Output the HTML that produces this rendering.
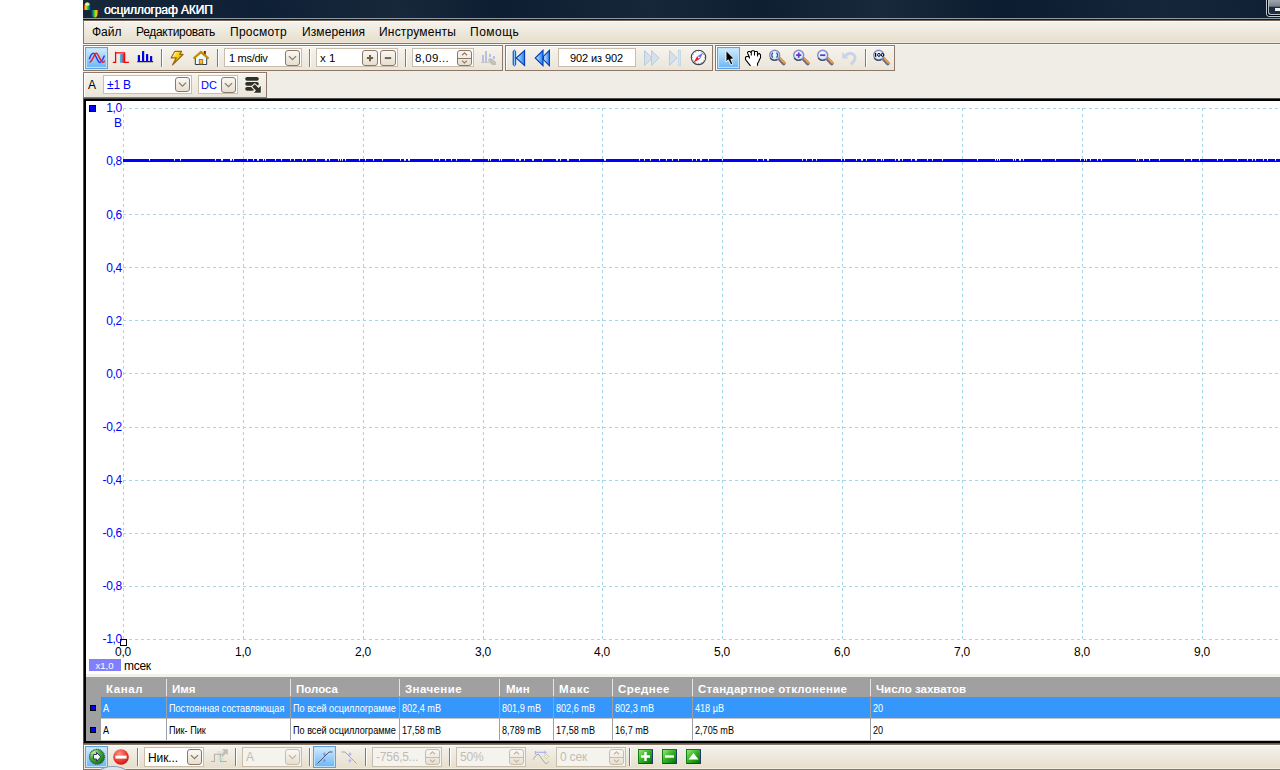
<!DOCTYPE html><html><head><meta charset="utf-8"><style>
*{margin:0;padding:0;box-sizing:border-box}
html,body{width:1280px;height:770px;overflow:hidden;background:#fff;font-family:"Liberation Sans",sans-serif}
.ab{position:absolute}
.t{position:absolute;white-space:pre;line-height:1}
.box{position:absolute;border:1px solid #8b7868;background:linear-gradient(#f6f4ee,#ebe5d8);box-shadow:inset 1px 1px 0 #fff}
.sep{position:absolute;width:2px;height:18px;border-left:1px solid #8b7868;border-right:1px solid #fff}
.cb{position:absolute;border:1px solid #c9bdab;background:#fff}
.dd{position:absolute;width:15px;height:16px;border:1px solid #8b7868;border-radius:3px;background:linear-gradient(#faf8f3,#e6dfcf)}
.sel{position:absolute;width:23px;height:22px;border:1px solid #5ea2e4;background:linear-gradient(#d2ecfc,#6ab6f6);box-shadow:inset 0 0 0 1px #bfe2fb}
</style></head><body>

<div class="ab" style="left:83px;top:0;width:1197px;height:18px;background:linear-gradient(80deg,#17283a 0.0%,#132438 7.3%,#0e2036 14.8%,#17283a 26.5%,#0d1e33 34.8%,#162739 47.4%,#0f1f32 56.6%,#18293b 66.6%,#0c1c30 76.6%,#15263a 90.0%,#0f2034 100.0%)"></div>
<div class="ab" style="left:83px;top:18px;width:1197px;height:1px;background:#8a9aa8"></div>
<div class="ab" style="left:83px;top:19px;width:1197px;height:1px;background:#121a22"></div>
<div class="ab" style="left:83px;top:20px;width:1197px;height:1px;background:#7a6454"></div>
<svg class="ab" style="left:83px;top:1px" width="17" height="17" viewBox="0 0 17 17">
<defs><linearGradient id="rb" x1="0" x2="1"><stop offset="0" stop-color="#e00000"/><stop offset=".3" stop-color="#f0e020"/><stop offset=".6" stop-color="#20c020"/><stop offset="1" stop-color="#0010d0"/></linearGradient>
<linearGradient id="rb2" x1="1" x2="0"><stop offset="0" stop-color="#e00000"/><stop offset=".3" stop-color="#f0e020"/><stop offset=".6" stop-color="#20c020"/><stop offset="1" stop-color="#0010d0"/></linearGradient></defs>
<path d="M0.6 9 C0.8 4,2 1.3,4.3 1.3 C6.5 1.3,7.8 4,8 9 Z" fill="url(#rb)"/>
<ellipse cx="4.6" cy="3.2" rx="2" ry="1.6" fill="#fff" opacity=".75"/>
<path d="M8 9 L15.4 9 C15.2 14,14 16.5,11.7 16.5 C9.5 16.5,8.2 14,8 9 Z" fill="url(#rb2)"/>
</svg>
<div class="t" style="left:104px;top:4px;font-size:12px;color:#fff;letter-spacing:-0.1px;text-shadow:0.35px 0 0 #fff">осциллограф АКИП</div>
<div class="ab" style="left:1266px;top:0;width:14px;height:17px;border-left:1px solid #c0c8d0;border-bottom:1px solid #c0c8d0;border-bottom-left-radius:4px"></div>
<div class="ab" style="left:1267px;top:0;width:13px;height:16px;border-left:1px solid #000;border-bottom:1px solid #000;border-bottom-left-radius:3px"></div>
<div class="ab" style="left:1268px;top:0;width:12px;height:15px;border-left:1px solid #b8c0c8;border-bottom:1px solid #b8c0c8;border-bottom-left-radius:3px;background:linear-gradient(#a0a6ae,#7a8088 45%,#1a2a40 50%,#203048)"></div>
<div class="ab" style="left:1275px;top:8px;width:5px;height:3px;background:#f0f0f0"></div>
<div class="ab" style="left:83px;top:21px;width:1197px;height:1px;background:#fdfcf9"></div>
<div class="ab" style="left:83px;top:22px;width:1197px;height:20px;background:linear-gradient(#f4f2ec,#e7dfcd)"></div>
<div class="ab" style="left:83px;top:42px;width:1197px;height:1px;background:#efe9dd"></div>
<div class="ab" style="left:83px;top:43px;width:1197px;height:1px;background:#8b7565"></div>
<div class="ab" style="left:83px;top:21px;width:1px;height:23px;background:#8b7565"></div>
<div class="t" style="left:92px;top:26px;font-size:12px;color:#000;letter-spacing:0px">Файл</div>
<div class="t" style="left:136px;top:26px;font-size:12px;color:#000;letter-spacing:-0.3px">Редактировать</div>
<div class="t" style="left:230px;top:26px;font-size:12px;color:#000;letter-spacing:0.25px">Просмотр</div>
<div class="t" style="left:302px;top:26px;font-size:12px;color:#000;letter-spacing:0.1px">Измерения</div>
<div class="t" style="left:379px;top:26px;font-size:12px;color:#000;letter-spacing:0.2px">Инструменты</div>
<div class="t" style="left:470px;top:26px;font-size:12px;color:#000;letter-spacing:0.5px">Помощь</div>
<div class="ab" style="left:83px;top:44px;width:1197px;height:1px;background:#f8f6f1"></div>
<div class="ab" style="left:83px;top:45px;width:1197px;height:53px;background:#f0ede6"></div>
<div class="box" style="left:83px;top:45px;width:420px;height:26px"></div>
<div class="box" style="left:505px;top:45px;width:208px;height:26px"></div>
<div class="box" style="left:715px;top:45px;width:180px;height:26px"></div>
<div class="sel" style="left:85px;top:47px;width:23px;height:22px"></div>
<svg class="ab" style="left:86px;top:48px" width="22" height="20" viewBox="0 0 22 20">
<path d="M3.3 11.2 C4.5 7.5,6 5.3,7.5 5.3 C9.5 5.3,11.5 14.5,13.8 14.5 C15.5 14.5,17 10.5,18.5 7.5" fill="none" stroke="#2040f8" stroke-width="1.5"/>
<path d="M3.5 14.2 C6.5 14.2,8 5.3,10.3 5.3 C12.5 5.3,14.5 14.3,16.8 14.3 C17.8 14.3,18.3 13.5,18.7 12.7" fill="none" stroke="#f81818" stroke-width="1.5"/>
</svg>
<svg class="ab" style="left:112px;top:51px" width="18" height="14" viewBox="0 0 18 14">
<defs><linearGradient id="pg" x1="0" x2="1"><stop offset="0" stop-color="#30c8ff"/><stop offset=".5" stop-color="#8080b0"/><stop offset="1" stop-color="#f01010"/></linearGradient></defs>
<rect x="7.9" y="2.8" width="4.4" height="9" fill="url(#pg)"/>
<path d="M0.8 11.4 H3.6 V1.9 H12.6 V11.4 H16.9" fill="none" stroke="#ff0000" stroke-width="1.3"/>
<path d="M3.6 2 V0.8" stroke="#ff0000" stroke-width="1.3"/>
</svg>
<svg class="ab" style="left:137px;top:50px" width="17" height="14" viewBox="0 0 17 14">
<rect x="0.8" y="5" width="2.2" height="6.6" rx="0.5" fill="#0000e0"/>
<rect x="5" y="1" width="2.2" height="10.6" rx="0.5" fill="#0000e0"/>
<rect x="9" y="4" width="2.2" height="7.6" rx="0.5" fill="#0000e0"/>
<rect x="13" y="6" width="2.2" height="5.6" rx="0.5" fill="#0000e0"/>
<rect x="0.2" y="11.1" width="16" height="1.1" rx="0.5" fill="#202020"/>
</svg>
<div class="sep" style="left:161px;top:49px;height:18px"></div>
<svg class="ab" style="left:168px;top:48px" width="20" height="20" viewBox="0 0 20 20">
<defs><linearGradient id="lg" x1="0" y1="0" x2="1" y2="1"><stop offset="0" stop-color="#fff8d0"/><stop offset=".45" stop-color="#f8d000"/><stop offset="1" stop-color="#d09000"/></linearGradient></defs>
<path d="M7 3.3 L13.6 3.3 L11.6 6.3 L15.2 6.3 L4.6 16.8 L8.3 9.9 L3.2 9.9 Z" fill="url(#lg)" stroke="#a06800" stroke-width="1.2" stroke-linejoin="round"/>
<path d="M7.5 4.3 L5 8.8" stroke="#fff" stroke-width="1" opacity=".8"/>
</svg>
<svg class="ab" style="left:190px;top:48px" width="22" height="20" viewBox="0 0 22 20">
<rect x="13.8" y="3" width="2" height="4" fill="#a00808"/>
<path d="M5.3 9.5 L11 4.5 L16.7 9.5 V16.5 H5.3 Z" fill="#f2f8fc" stroke="#2a3a50" stroke-width="1"/>
<rect x="9.3" y="11.5" width="3.4" height="4.5" fill="#f0c040" stroke="#a87010" stroke-width="0.9"/>
<path d="M3.5 10.6 L11 4 L18.6 10.6" fill="none" stroke="#c09000" stroke-width="2.1" stroke-linejoin="miter"/>
</svg>
<div class="sep" style="left:217px;top:49px;height:18px"></div>
<div class="cb" style="left:224px;top:48px;width:78px;height:19px;background:#fff;border-color:#c9bdab"></div>
<div class="dd" style="left:285px;top:50px;width:15px;height:16px;border-color:#8b7868"></div>
<svg class="ab" style="left:285px;top:50px" width="15" height="16"><path d="M3.9 6.1 L7.5 9.7 L11.1 6.1" fill="none" stroke="#8b7868" stroke-width="1.25"/></svg>
<div class="t" style="left:229px;top:53px;font-size:11px;color:#000;letter-spacing:-0.3px">1 ms/div</div>
<div class="sep" style="left:309px;top:49px;height:18px"></div>
<div class="cb" style="left:316px;top:48px;width:82px;height:19px;background:#fff;border-color:#c9bdab"></div>
<div class="t" style="left:320px;top:53px;font-size:11.5px;color:#000">x 1</div>
<div class="dd" style="left:362px;top:50px;width:16px;height:16px"></div>
<svg class="ab" style="left:362px;top:50px" width="16" height="16"><path d="M8 5 V11.2 M4.9 8.1 H11.1" stroke="#706050" stroke-width="2"/></svg>
<div class="dd" style="left:380px;top:50px;width:16px;height:16px"></div>
<svg class="ab" style="left:380px;top:50px" width="16" height="16"><path d="M4.8 8.1 H11.2" stroke="#706050" stroke-width="2"/></svg>
<div class="sep" style="left:405px;top:49px;height:18px"></div>
<div class="cb" style="left:412px;top:48px;width:62px;height:19px;background:#fff;border-color:#c9bdab"></div>
<div class="dd" style="left:457px;top:50px;width:15px;height:16px;border-color:#8b7868"></div>
<div class="ab" style="left:458px;top:58px;width:13px;height:1px;background:#8b7868"></div>
<svg class="ab" style="left:457px;top:50px" width="15" height="16"><path d="M5.0 5.2 L7.5 2.9 L10.0 5.2 M5.0 10.6 L7.5 12.9 L10.0 10.6" fill="none" stroke="#8b7868" stroke-width="1.2"/></svg>
<div class="t" style="left:415px;top:53px;font-size:11.5px;color:#000;letter-spacing:0.3px">8,09...</div>
<svg class="ab" style="left:480px;top:50px" width="18" height="16" viewBox="0 0 18 16">
<rect x="2" y="5" width="2" height="7" fill="#b8c0e8"/><rect x="5" y="1" width="2" height="11" fill="#b8c0e8"/>
<rect x="9" y="4" width="2" height="3" fill="#b8c0e8"/><rect x="13" y="6" width="2" height="3" fill="#b8c0e8"/>
<rect x="1" y="12" width="8" height="1" fill="#c8c8c8"/>
<path d="M8 9 L11 8 L16 12 L16 15 L12 15 L9 12 Z" fill="#c4c0b8"/>
</svg>
<svg class="ab" style="left:512px;top:49px" width="40" height="18" viewBox="0 0 40 18">
<defs><linearGradient id="bl" x1="0" x2="1"><stop offset="0" stop-color="#d8f4ff"/><stop offset="1" stop-color="#1a7ef0"/></linearGradient>
<linearGradient id="bb" x1="0" x2="1"><stop offset="0" stop-color="#1060e0"/><stop offset=".5" stop-color="#90d0ff"/><stop offset="1" stop-color="#1060e0"/></linearGradient></defs>
<path d="M2.4 1 L3.7 2.2 V15.8 L2.4 17 L1.1 15.8 V2.2 Z" fill="url(#bb)" stroke="#0040c0" stroke-width="0.8"/>
<path d="M12.6 1.4 V16.6 L4.2 9 Z" fill="url(#bl)" stroke="#0038b8" stroke-width="1.1" stroke-linejoin="miter"/>
<path d="M31 1.4 V16.6 L23.2 9 Z" fill="url(#bl)" stroke="#0038b8" stroke-width="1.1" stroke-linejoin="miter"/>
<path d="M37.4 1.4 V16.6 L31.6 10.8 V7.2 Z" fill="url(#bl)" stroke="#0038b8" stroke-width="1.1" stroke-linejoin="miter"/>
</svg>
<div class="cb" style="left:558px;top:48px;width:78px;height:19px;background:#fff;border-color:#c9bdab"></div>
<div class="t" style="left:570px;top:53px;font-size:11px;color:#000;letter-spacing:-0.1px">902 из 902</div>
<svg class="ab" style="left:643px;top:49px" width="40" height="18" viewBox="0 0 40 18">
<path d="M1.5 1.5 V16.5 L9 9 Z" fill="#d4e0ec" stroke="#b8cce0" stroke-width="1" stroke-linejoin="round"/>
<path d="M8.5 1.5 V16.5 L16 9 Z" fill="#d4e0ec" stroke="#b8cce0" stroke-width="1" stroke-linejoin="round"/>
<path d="M26.5 1.5 V16.5 L34 9 Z" fill="#d4e0ec" stroke="#b8cce0" stroke-width="1" stroke-linejoin="round"/>
<rect x="35.3" y="1.3" width="2.2" height="15.4" fill="#d8e4ee" stroke="#bcd0e2" stroke-width="0.7"/>
</svg>
<svg class="ab" style="left:690px;top:49px" width="17" height="17" viewBox="0 0 17 17">
<circle cx="8.5" cy="8.4" r="7.2" fill="#fcfcfe" stroke="#3a4250" stroke-width="1.1"/>
<path d="M14.10 8.40 L15.10 8.40 M13.35 11.20 L14.22 11.70 M11.30 13.25 L11.80 14.12 M8.50 14.00 L8.50 15.00 M5.70 13.25 L5.20 14.12 M3.65 11.20 L2.78 11.70 M2.90 8.40 L1.90 8.40 M3.65 5.60 L2.78 5.10 M5.70 3.55 L5.20 2.68 M8.50 2.80 L8.50 1.80 M11.30 3.55 L11.80 2.68 M13.35 5.60 L14.22 5.10 " stroke="#8088a0" stroke-width="0.8"/>
<path d="M13.4 3.5 L10.2 9.6 L7.4 7.2 Z" fill="#7070f0"/>
<path d="M3.6 13.4 L7.2 7.2 L10.2 9.8 Z" fill="#f01818"/>
<circle cx="8.7" cy="8.4" r="0.9" fill="#fff"/>
</svg>
<div class="sel" style="left:717px;top:47px;width:23px;height:22px"></div>
<svg class="ab" style="left:718px;top:47px" width="22" height="21" viewBox="0 0 22 21">
<path d="M8 3.5 L8 15 L10.3 12.8 L12.8 17.8 L14.8 16.8 L12.8 12.2 L16.2 11.8 Z" fill="#000" stroke="#fff" stroke-width="0.9" stroke-linejoin="miter"/>
</svg>
<svg class="ab" style="left:740px;top:47px" width="24" height="21" viewBox="0 0 24 21">
<path d="M10.5 18.8 L5.5 12.5 L5.5 10.3 L6.5 9.5 L8.5 9.5 L9.5 10.5 L8 7 L7.5 5.5 L8.3 4.5 L10 4.5 L11 5.5 L12 3.8 L14 3.8 L14.5 4.5 L17 4.5 L17.5 5.5 L17.5 7.5 L19.3 6.5 L20.5 7.8 L20.5 10.8 L19.5 12.5 L18.5 15 L17.5 16.5 L17.5 18.8 Z" fill="#fff"/>
<path d="M10.5 18.8 L5.5 12.5 L5.5 10.3 L6.5 9.5 L8.5 9.5 L9.5 10.5 L8 7 L7.5 5.5 L8.3 4.5 L10 4.5 L11 5.5 L12 3.8 L14 3.8 L14.5 4.5 L17 4.5 L17.5 5.5 L17.5 7.5 L19.3 6.5 L20.5 7.8 L20.5 10.8 L19.5 12.5 L18.5 15 L17.5 16.5 L17.5 18.8 M11.3 5.5 V8.5 M14.5 4.5 V8.5 M17.5 7.5 V9.5 M9.5 10.5 V11.5" fill="none" stroke="#000" stroke-width="1.1"/>
</svg>
<svg class="ab" style="left:766px;top:47px" width="22" height="21" viewBox="0 0 22 21">
<defs><linearGradient id="hd766" x1="0" y1="1" x2="1" y2="0"><stop offset="0" stop-color="#606878"/><stop offset=".45" stop-color="#8890c0"/><stop offset=".55" stop-color="#f0a030"/><stop offset="1" stop-color="#f07060"/></linearGradient>
<radialGradient id="gl766" cx=".45" cy=".4" r=".6"><stop offset="0" stop-color="#fff"/><stop offset="1" stop-color="#b8e4fc"/></radialGradient></defs>
<path d="M13.6 12 L17.8 16.4" stroke="#6a6888" stroke-width="3.8" stroke-linecap="round"/>
<path d="M14.4 11.6 L18.4 15.8" stroke="#f4a040" stroke-width="1.8" stroke-linecap="round"/>
<circle cx="8.7" cy="8.2" r="5" fill="url(#gl766)" stroke="#8a8cc8" stroke-width="1.4"/>
<path d="M4.2 10.8 A5 5 0 0 0 11.5 12.4" fill="none" stroke="#505060" stroke-width="1.4"/>
<path d="M7 5.8 A3 3 0 0 0 7 10.6 M10.4 5.8 A3 3 0 0 1 10.4 10.6" fill="none" stroke="#404890" stroke-width="1.3"/>
</svg>
<svg class="ab" style="left:790px;top:47px" width="22" height="21" viewBox="0 0 22 21">
<defs><linearGradient id="hd790" x1="0" y1="1" x2="1" y2="0"><stop offset="0" stop-color="#606878"/><stop offset=".45" stop-color="#8890c0"/><stop offset=".55" stop-color="#f0a030"/><stop offset="1" stop-color="#f07060"/></linearGradient>
<radialGradient id="gl790" cx=".45" cy=".4" r=".6"><stop offset="0" stop-color="#fff"/><stop offset="1" stop-color="#b8e4fc"/></radialGradient></defs>
<path d="M13.6 12 L17.8 16.4" stroke="#6a6888" stroke-width="3.8" stroke-linecap="round"/>
<path d="M14.4 11.6 L18.4 15.8" stroke="#f4a040" stroke-width="1.8" stroke-linecap="round"/>
<circle cx="8.7" cy="8.2" r="5" fill="url(#gl790)" stroke="#8a8cc8" stroke-width="1.4"/>
<path d="M4.2 10.8 A5 5 0 0 0 11.5 12.4" fill="none" stroke="#505060" stroke-width="1.4"/>
<path d="M8.7 5.6 V10.8 M6.1 8.2 H11.3" stroke="#7030c8" stroke-width="1.8"/>
</svg>
<svg class="ab" style="left:814px;top:47px" width="22" height="21" viewBox="0 0 22 21">
<defs><linearGradient id="hd814" x1="0" y1="1" x2="1" y2="0"><stop offset="0" stop-color="#606878"/><stop offset=".45" stop-color="#8890c0"/><stop offset=".55" stop-color="#f0a030"/><stop offset="1" stop-color="#f07060"/></linearGradient>
<radialGradient id="gl814" cx=".45" cy=".4" r=".6"><stop offset="0" stop-color="#fff"/><stop offset="1" stop-color="#b8e4fc"/></radialGradient></defs>
<path d="M13.6 12 L17.8 16.4" stroke="#6a6888" stroke-width="3.8" stroke-linecap="round"/>
<path d="M14.4 11.6 L18.4 15.8" stroke="#f4a040" stroke-width="1.8" stroke-linecap="round"/>
<circle cx="8.7" cy="8.2" r="5" fill="url(#gl814)" stroke="#8a8cc8" stroke-width="1.4"/>
<path d="M4.2 10.8 A5 5 0 0 0 11.5 12.4" fill="none" stroke="#505060" stroke-width="1.4"/>
<path d="M6.1 8.2 H11.3" stroke="#7030c8" stroke-width="1.8"/>
</svg>
<svg class="ab" style="left:841px;top:50px" width="18" height="18" viewBox="0 0 18 18">
<path d="M3.8 6.8 C6 3,11 2.3,13.3 5.3 C15.3 8.6,12.6 12.3,9.6 14.3" fill="none" stroke="#c8d4e6" stroke-width="2.9"/>
<path d="M1.2 2 L1.2 8.6 L7.6 8.6 Z" fill="#c8d4e6"/>
</svg>
<div class="sep" style="left:865px;top:49px;height:18px"></div>
<svg class="ab" style="left:870px;top:47px" width="22" height="21" viewBox="0 0 22 21">
<defs><linearGradient id="hd870" x1="0" y1="1" x2="1" y2="0"><stop offset="0" stop-color="#606878"/><stop offset=".45" stop-color="#8890c0"/><stop offset=".55" stop-color="#f0a030"/><stop offset="1" stop-color="#f07060"/></linearGradient>
<radialGradient id="gl870" cx=".45" cy=".4" r=".6"><stop offset="0" stop-color="#fff"/><stop offset="1" stop-color="#b8e4fc"/></radialGradient></defs>
<path d="M13.6 12 L17.8 16.4" stroke="#6a6888" stroke-width="3.8" stroke-linecap="round"/>
<path d="M14.4 11.6 L18.4 15.8" stroke="#f4a040" stroke-width="1.8" stroke-linecap="round"/>
<circle cx="8.7" cy="8.2" r="5" fill="url(#gl870)" stroke="#8a8cc8" stroke-width="1.4"/>
<path d="M4.2 10.8 A5 5 0 0 0 11.5 12.4" fill="none" stroke="#505060" stroke-width="1.4"/>
<rect x="5" y="6" width="1.2" height="3.8" fill="#000"/><ellipse cx="8.9" cy="7.9" rx="1.3" ry="1.5" fill="none" stroke="#000" stroke-width="1"/><ellipse cx="12.5" cy="7.9" rx="1.3" ry="1.5" fill="none" stroke="#000" stroke-width="1"/>
</svg>
<div class="box" style="left:83px;top:72px;width:184px;height:26px"></div>
<div class="t" style="left:88px;top:79px;font-size:12px;color:#000">A</div>
<div class="cb" style="left:103px;top:75px;width:89px;height:19px;background:#fff;border-color:#c9bdab"></div>
<div class="dd" style="left:175px;top:77px;width:15px;height:15px;border-color:#8b7868"></div>
<svg class="ab" style="left:175px;top:77px" width="15" height="15"><path d="M3.9 5.6 L7.5 9.2 L11.1 5.6" fill="none" stroke="#8b7868" stroke-width="1.25"/></svg>
<div class="t" style="left:107px;top:79px;font-size:12px;color:#0000ff;letter-spacing:-0.2px">±1 В</div>
<div class="cb" style="left:198px;top:75px;width:40px;height:19px;background:#fff;border-color:#c9bdab"></div>
<div class="dd" style="left:221px;top:77px;width:15px;height:16px;border-color:#8b7868"></div>
<svg class="ab" style="left:221px;top:77px" width="15" height="16"><path d="M3.9 6.1 L7.5 9.7 L11.1 6.1" fill="none" stroke="#8b7868" stroke-width="1.25"/></svg>
<div class="t" style="left:201px;top:80px;font-size:11px;color:#0000ff">DC</div>
<svg class="ab" style="left:242px;top:74px" width="24" height="22" viewBox="0 0 24 22">
<rect x="3.2" y="3" width="13.6" height="3.7" rx="1.85" fill="#303028"/>
<rect x="3.2" y="8" width="13.6" height="3.7" rx="1.85" fill="#303028"/>
<rect x="3.2" y="13" width="9" height="3.7" rx="1.85" fill="#303028"/>
<path d="M12.77 10.23 L16.52 13.98 L18.8 11.7 L18.8 18.8 L11.7 18.8 L13.98 16.52 L10.23 12.77 Z" fill="#f6f3ec" stroke="#f6f3ec" stroke-width="2" stroke-linejoin="round"/>
<path d="M12.77 10.23 L16.52 13.98 L18.8 11.7 L18.8 18.8 L11.7 18.8 L13.98 16.52 L10.23 12.77 Z" fill="#303028"/>
</svg>
<div class="ab" style="left:83px;top:98px;width:1197px;height:1px;background:#505050"></div>
<div class="ab" style="left:83px;top:98px;width:1px;height:646px;background:#505050"></div>
<div class="ab" style="left:84px;top:99px;width:1196px;height:2px;background:#000"></div>
<div class="ab" style="left:84px;top:99px;width:2px;height:644px;background:#000"></div>
<div class="ab" style="left:84px;top:741px;width:1196px;height:2px;background:#000"></div>
<div class="ab" style="left:86px;top:101px;width:1194px;height:573px;background:#fff"></div>
<div class="ab" style="left:86px;top:674px;width:1194px;height:3px;background:#f3f1ec"></div>
<svg class="ab" style="left:0;top:0" width="1280" height="770" shape-rendering="crispEdges"><line x1="123.5" y1="108" x2="123.5" y2="640" stroke="#a8d4e4" stroke-width="1" stroke-dasharray="3 3"/><line x1="243.5" y1="108" x2="243.5" y2="640" stroke="#a8d4e4" stroke-width="1" stroke-dasharray="3 3"/><line x1="363.5" y1="108" x2="363.5" y2="640" stroke="#a8d4e4" stroke-width="1" stroke-dasharray="3 3"/><line x1="483.5" y1="108" x2="483.5" y2="640" stroke="#a8d4e4" stroke-width="1" stroke-dasharray="3 3"/><line x1="602.5" y1="108" x2="602.5" y2="640" stroke="#a8d4e4" stroke-width="1" stroke-dasharray="3 3"/><line x1="722.5" y1="108" x2="722.5" y2="640" stroke="#a8d4e4" stroke-width="1" stroke-dasharray="3 3"/><line x1="842.5" y1="108" x2="842.5" y2="640" stroke="#a8d4e4" stroke-width="1" stroke-dasharray="3 3"/><line x1="962.5" y1="108" x2="962.5" y2="640" stroke="#a8d4e4" stroke-width="1" stroke-dasharray="3 3"/><line x1="1082.5" y1="108" x2="1082.5" y2="640" stroke="#a8d4e4" stroke-width="1" stroke-dasharray="3 3"/><line x1="1202.5" y1="108" x2="1202.5" y2="640" stroke="#a8d4e4" stroke-width="1" stroke-dasharray="3 3"/><line x1="123" y1="108.5" x2="1280" y2="108.5" stroke="#a8d4e4" stroke-width="1" stroke-dasharray="3 3"/><line x1="123" y1="161.5" x2="1280" y2="161.5" stroke="#a8d4e4" stroke-width="1" stroke-dasharray="3 3"/><line x1="123" y1="214.5" x2="1280" y2="214.5" stroke="#a8d4e4" stroke-width="1" stroke-dasharray="3 3"/><line x1="123" y1="267.5" x2="1280" y2="267.5" stroke="#a8d4e4" stroke-width="1" stroke-dasharray="3 3"/><line x1="123" y1="320.5" x2="1280" y2="320.5" stroke="#a8d4e4" stroke-width="1" stroke-dasharray="3 3"/><line x1="123" y1="373.5" x2="1280" y2="373.5" stroke="#a8d4e4" stroke-width="1" stroke-dasharray="3 3"/><line x1="123" y1="427.5" x2="1280" y2="427.5" stroke="#a8d4e4" stroke-width="1" stroke-dasharray="3 3"/><line x1="123" y1="480.5" x2="1280" y2="480.5" stroke="#a8d4e4" stroke-width="1" stroke-dasharray="3 3"/><line x1="123" y1="533.5" x2="1280" y2="533.5" stroke="#a8d4e4" stroke-width="1" stroke-dasharray="3 3"/><line x1="123" y1="586.5" x2="1280" y2="586.5" stroke="#a8d4e4" stroke-width="1" stroke-dasharray="3 3"/><line x1="123" y1="639.5" x2="1280" y2="639.5" stroke="#a8d4e4" stroke-width="1" stroke-dasharray="3 3"/><rect x="123" y="159" width="1157" height="3" fill="#0000ff"/><rect x="149" y="159" width="1" height="1" fill="#fff"/><rect x="149" y="160" width="1" height="1" fill="#b0b0ff"/><rect x="174" y="159" width="1" height="1" fill="#fff"/><rect x="174" y="160" width="1" height="1" fill="#b0b0ff"/><rect x="180" y="159" width="1" height="1" fill="#fff"/><rect x="180" y="160" width="1" height="1" fill="#b0b0ff"/><rect x="215" y="159" width="1" height="1" fill="#fff"/><rect x="215" y="160" width="1" height="1" fill="#b0b0ff"/><rect x="221" y="159" width="2" height="1" fill="#fff"/><rect x="221" y="160" width="2" height="1" fill="#b0b0ff"/><rect x="230" y="159" width="2" height="1" fill="#fff"/><rect x="230" y="160" width="2" height="1" fill="#b0b0ff"/><rect x="233" y="159" width="1" height="1" fill="#fff"/><rect x="233" y="160" width="1" height="1" fill="#b0b0ff"/><rect x="247" y="159" width="1" height="1" fill="#fff"/><rect x="247" y="160" width="1" height="1" fill="#b0b0ff"/><rect x="253" y="159" width="1" height="1" fill="#fff"/><rect x="253" y="160" width="1" height="1" fill="#b0b0ff"/><rect x="257" y="159" width="2" height="1" fill="#fff"/><rect x="257" y="160" width="2" height="1" fill="#b0b0ff"/><rect x="263" y="159" width="1" height="1" fill="#fff"/><rect x="263" y="160" width="1" height="1" fill="#b0b0ff"/><rect x="265" y="159" width="1" height="1" fill="#fff"/><rect x="265" y="160" width="1" height="1" fill="#b0b0ff"/><rect x="275" y="159" width="1" height="1" fill="#fff"/><rect x="275" y="160" width="1" height="1" fill="#b0b0ff"/><rect x="281" y="159" width="1" height="1" fill="#fff"/><rect x="281" y="160" width="1" height="1" fill="#b0b0ff"/><rect x="290" y="159" width="1" height="1" fill="#fff"/><rect x="290" y="160" width="1" height="1" fill="#b0b0ff"/><rect x="294" y="159" width="1" height="1" fill="#fff"/><rect x="294" y="160" width="1" height="1" fill="#b0b0ff"/><rect x="302" y="159" width="1" height="1" fill="#fff"/><rect x="302" y="160" width="1" height="1" fill="#b0b0ff"/><rect x="306" y="159" width="1" height="1" fill="#fff"/><rect x="306" y="160" width="1" height="1" fill="#b0b0ff"/><rect x="316" y="159" width="1" height="1" fill="#fff"/><rect x="316" y="160" width="1" height="1" fill="#b0b0ff"/><rect x="325" y="159" width="2" height="1" fill="#fff"/><rect x="325" y="160" width="2" height="1" fill="#b0b0ff"/><rect x="329" y="159" width="1" height="1" fill="#fff"/><rect x="329" y="160" width="1" height="1" fill="#b0b0ff"/><rect x="338" y="159" width="1" height="1" fill="#fff"/><rect x="338" y="160" width="1" height="1" fill="#b0b0ff"/><rect x="340" y="159" width="1" height="1" fill="#fff"/><rect x="340" y="160" width="1" height="1" fill="#b0b0ff"/><rect x="342" y="159" width="1" height="1" fill="#fff"/><rect x="342" y="160" width="1" height="1" fill="#b0b0ff"/><rect x="345" y="159" width="1" height="1" fill="#fff"/><rect x="345" y="160" width="1" height="1" fill="#b0b0ff"/><rect x="359" y="159" width="1" height="1" fill="#fff"/><rect x="359" y="160" width="1" height="1" fill="#b0b0ff"/><rect x="365" y="159" width="1" height="1" fill="#fff"/><rect x="365" y="160" width="1" height="1" fill="#b0b0ff"/><rect x="373" y="159" width="1" height="1" fill="#fff"/><rect x="373" y="160" width="1" height="1" fill="#b0b0ff"/><rect x="382" y="159" width="1" height="1" fill="#fff"/><rect x="382" y="160" width="1" height="1" fill="#b0b0ff"/><rect x="400" y="159" width="1" height="1" fill="#fff"/><rect x="400" y="160" width="1" height="1" fill="#b0b0ff"/><rect x="404" y="159" width="2" height="1" fill="#fff"/><rect x="404" y="160" width="2" height="1" fill="#b0b0ff"/><rect x="408" y="159" width="2" height="1" fill="#fff"/><rect x="408" y="160" width="2" height="1" fill="#b0b0ff"/><rect x="433" y="159" width="1" height="1" fill="#fff"/><rect x="433" y="160" width="1" height="1" fill="#b0b0ff"/><rect x="439" y="159" width="1" height="1" fill="#fff"/><rect x="439" y="160" width="1" height="1" fill="#b0b0ff"/><rect x="445" y="159" width="1" height="1" fill="#fff"/><rect x="445" y="160" width="1" height="1" fill="#b0b0ff"/><rect x="451" y="159" width="1" height="1" fill="#fff"/><rect x="451" y="160" width="1" height="1" fill="#b0b0ff"/><rect x="456" y="159" width="1" height="1" fill="#fff"/><rect x="456" y="160" width="1" height="1" fill="#b0b0ff"/><rect x="470" y="159" width="2" height="1" fill="#fff"/><rect x="470" y="160" width="2" height="1" fill="#b0b0ff"/><rect x="488" y="159" width="1" height="1" fill="#fff"/><rect x="488" y="160" width="1" height="1" fill="#b0b0ff"/><rect x="490" y="159" width="1" height="1" fill="#fff"/><rect x="490" y="160" width="1" height="1" fill="#b0b0ff"/><rect x="499" y="159" width="1" height="1" fill="#fff"/><rect x="499" y="160" width="1" height="1" fill="#b0b0ff"/><rect x="501" y="159" width="1" height="1" fill="#fff"/><rect x="501" y="160" width="1" height="1" fill="#b0b0ff"/><rect x="515" y="159" width="1" height="1" fill="#fff"/><rect x="515" y="160" width="1" height="1" fill="#b0b0ff"/><rect x="519" y="159" width="2" height="1" fill="#fff"/><rect x="519" y="160" width="2" height="1" fill="#b0b0ff"/><rect x="524" y="159" width="1" height="1" fill="#fff"/><rect x="524" y="160" width="1" height="1" fill="#b0b0ff"/><rect x="532" y="159" width="2" height="1" fill="#fff"/><rect x="532" y="160" width="2" height="1" fill="#b0b0ff"/><rect x="542" y="159" width="1" height="1" fill="#fff"/><rect x="542" y="160" width="1" height="1" fill="#b0b0ff"/><rect x="556" y="159" width="2" height="1" fill="#fff"/><rect x="556" y="160" width="2" height="1" fill="#b0b0ff"/><rect x="560" y="159" width="1" height="1" fill="#fff"/><rect x="560" y="160" width="1" height="1" fill="#b0b0ff"/><rect x="567" y="159" width="2" height="1" fill="#fff"/><rect x="567" y="160" width="2" height="1" fill="#b0b0ff"/><rect x="579" y="159" width="1" height="1" fill="#fff"/><rect x="579" y="160" width="1" height="1" fill="#b0b0ff"/><rect x="604" y="159" width="2" height="1" fill="#fff"/><rect x="604" y="160" width="2" height="1" fill="#b0b0ff"/><rect x="639" y="159" width="1" height="1" fill="#fff"/><rect x="639" y="160" width="1" height="1" fill="#b0b0ff"/><rect x="644" y="159" width="1" height="1" fill="#fff"/><rect x="644" y="160" width="1" height="1" fill="#b0b0ff"/><rect x="650" y="159" width="1" height="1" fill="#fff"/><rect x="650" y="160" width="1" height="1" fill="#b0b0ff"/><rect x="659" y="159" width="1" height="1" fill="#fff"/><rect x="659" y="160" width="1" height="1" fill="#b0b0ff"/><rect x="666" y="159" width="1" height="1" fill="#fff"/><rect x="666" y="160" width="1" height="1" fill="#b0b0ff"/><rect x="672" y="159" width="1" height="1" fill="#fff"/><rect x="672" y="160" width="1" height="1" fill="#b0b0ff"/><rect x="678" y="159" width="1" height="1" fill="#fff"/><rect x="678" y="160" width="1" height="1" fill="#b0b0ff"/><rect x="692" y="159" width="1" height="1" fill="#fff"/><rect x="692" y="160" width="1" height="1" fill="#b0b0ff"/><rect x="696" y="159" width="1" height="1" fill="#fff"/><rect x="696" y="160" width="1" height="1" fill="#b0b0ff"/><rect x="700" y="159" width="2" height="1" fill="#fff"/><rect x="700" y="160" width="2" height="1" fill="#b0b0ff"/><rect x="708" y="159" width="1" height="1" fill="#fff"/><rect x="708" y="160" width="1" height="1" fill="#b0b0ff"/><rect x="722" y="159" width="1" height="1" fill="#fff"/><rect x="722" y="160" width="1" height="1" fill="#b0b0ff"/><rect x="757" y="159" width="1" height="1" fill="#fff"/><rect x="757" y="160" width="1" height="1" fill="#b0b0ff"/><rect x="763" y="159" width="1" height="1" fill="#fff"/><rect x="763" y="160" width="1" height="1" fill="#b0b0ff"/><rect x="767" y="159" width="2" height="1" fill="#fff"/><rect x="767" y="160" width="2" height="1" fill="#b0b0ff"/><rect x="802" y="159" width="1" height="1" fill="#fff"/><rect x="802" y="160" width="1" height="1" fill="#b0b0ff"/><rect x="806" y="159" width="1" height="1" fill="#fff"/><rect x="806" y="160" width="1" height="1" fill="#b0b0ff"/><rect x="812" y="159" width="1" height="1" fill="#fff"/><rect x="812" y="160" width="1" height="1" fill="#b0b0ff"/><rect x="816" y="159" width="1" height="1" fill="#fff"/><rect x="816" y="160" width="1" height="1" fill="#b0b0ff"/><rect x="841" y="159" width="1" height="1" fill="#fff"/><rect x="841" y="160" width="1" height="1" fill="#b0b0ff"/><rect x="844" y="159" width="1" height="1" fill="#fff"/><rect x="844" y="160" width="1" height="1" fill="#b0b0ff"/><rect x="856" y="159" width="1" height="1" fill="#fff"/><rect x="856" y="160" width="1" height="1" fill="#b0b0ff"/><rect x="861" y="159" width="2" height="1" fill="#fff"/><rect x="861" y="160" width="2" height="1" fill="#b0b0ff"/><rect x="866" y="159" width="1" height="1" fill="#fff"/><rect x="866" y="160" width="1" height="1" fill="#b0b0ff"/><rect x="876" y="159" width="1" height="1" fill="#fff"/><rect x="876" y="160" width="1" height="1" fill="#b0b0ff"/><rect x="881" y="159" width="1" height="1" fill="#fff"/><rect x="881" y="160" width="1" height="1" fill="#b0b0ff"/><rect x="883" y="159" width="1" height="1" fill="#fff"/><rect x="883" y="160" width="1" height="1" fill="#b0b0ff"/><rect x="895" y="159" width="1" height="1" fill="#fff"/><rect x="895" y="160" width="1" height="1" fill="#b0b0ff"/><rect x="898" y="159" width="2" height="1" fill="#fff"/><rect x="898" y="160" width="2" height="1" fill="#b0b0ff"/><rect x="902" y="159" width="1" height="1" fill="#fff"/><rect x="902" y="160" width="1" height="1" fill="#b0b0ff"/><rect x="911" y="159" width="1" height="1" fill="#fff"/><rect x="911" y="160" width="1" height="1" fill="#b0b0ff"/><rect x="915" y="159" width="2" height="1" fill="#fff"/><rect x="915" y="160" width="2" height="1" fill="#b0b0ff"/><rect x="927" y="159" width="1" height="1" fill="#fff"/><rect x="927" y="160" width="1" height="1" fill="#b0b0ff"/><rect x="932" y="159" width="1" height="1" fill="#fff"/><rect x="932" y="160" width="1" height="1" fill="#b0b0ff"/><rect x="942" y="159" width="1" height="1" fill="#fff"/><rect x="942" y="160" width="1" height="1" fill="#b0b0ff"/><rect x="977" y="159" width="1" height="1" fill="#fff"/><rect x="977" y="160" width="1" height="1" fill="#b0b0ff"/><rect x="995" y="159" width="1" height="1" fill="#fff"/><rect x="995" y="160" width="1" height="1" fill="#b0b0ff"/><rect x="997" y="159" width="1" height="1" fill="#fff"/><rect x="997" y="160" width="1" height="1" fill="#b0b0ff"/><rect x="999" y="159" width="1" height="1" fill="#fff"/><rect x="999" y="160" width="1" height="1" fill="#b0b0ff"/><rect x="1013" y="159" width="1" height="1" fill="#fff"/><rect x="1013" y="160" width="1" height="1" fill="#b0b0ff"/><rect x="1015" y="159" width="1" height="1" fill="#fff"/><rect x="1015" y="160" width="1" height="1" fill="#b0b0ff"/><rect x="1019" y="159" width="2" height="1" fill="#fff"/><rect x="1019" y="160" width="2" height="1" fill="#b0b0ff"/><rect x="1023" y="159" width="1" height="1" fill="#fff"/><rect x="1023" y="160" width="1" height="1" fill="#b0b0ff"/><rect x="1041" y="159" width="1" height="1" fill="#fff"/><rect x="1041" y="160" width="1" height="1" fill="#b0b0ff"/><rect x="1055" y="159" width="1" height="1" fill="#fff"/><rect x="1055" y="160" width="1" height="1" fill="#b0b0ff"/><rect x="1080" y="159" width="1" height="1" fill="#fff"/><rect x="1080" y="160" width="1" height="1" fill="#b0b0ff"/><rect x="1084" y="159" width="1" height="1" fill="#fff"/><rect x="1084" y="160" width="1" height="1" fill="#b0b0ff"/><rect x="1086" y="159" width="1" height="1" fill="#fff"/><rect x="1086" y="160" width="1" height="1" fill="#b0b0ff"/><rect x="1090" y="159" width="1" height="1" fill="#fff"/><rect x="1090" y="160" width="1" height="1" fill="#b0b0ff"/><rect x="1097" y="159" width="1" height="1" fill="#fff"/><rect x="1097" y="160" width="1" height="1" fill="#b0b0ff"/><rect x="1101" y="159" width="1" height="1" fill="#fff"/><rect x="1101" y="160" width="1" height="1" fill="#b0b0ff"/><rect x="1136" y="159" width="1" height="1" fill="#fff"/><rect x="1136" y="160" width="1" height="1" fill="#b0b0ff"/><rect x="1138" y="159" width="1" height="1" fill="#fff"/><rect x="1138" y="160" width="1" height="1" fill="#b0b0ff"/><rect x="1143" y="159" width="1" height="1" fill="#fff"/><rect x="1143" y="160" width="1" height="1" fill="#b0b0ff"/><rect x="1149" y="159" width="1" height="1" fill="#fff"/><rect x="1149" y="160" width="1" height="1" fill="#b0b0ff"/><rect x="1159" y="159" width="1" height="1" fill="#fff"/><rect x="1159" y="160" width="1" height="1" fill="#b0b0ff"/><rect x="1184" y="159" width="1" height="1" fill="#fff"/><rect x="1184" y="160" width="1" height="1" fill="#b0b0ff"/><rect x="1191" y="159" width="1" height="1" fill="#fff"/><rect x="1191" y="160" width="1" height="1" fill="#b0b0ff"/><rect x="1199" y="159" width="1" height="1" fill="#fff"/><rect x="1199" y="160" width="1" height="1" fill="#b0b0ff"/><rect x="1217" y="159" width="1" height="1" fill="#fff"/><rect x="1217" y="160" width="1" height="1" fill="#b0b0ff"/><rect x="1223" y="159" width="1" height="1" fill="#fff"/><rect x="1223" y="160" width="1" height="1" fill="#b0b0ff"/><rect x="1237" y="159" width="1" height="1" fill="#fff"/><rect x="1237" y="160" width="1" height="1" fill="#b0b0ff"/><rect x="1247" y="159" width="1" height="1" fill="#fff"/><rect x="1247" y="160" width="1" height="1" fill="#b0b0ff"/><rect x="1252" y="159" width="1" height="1" fill="#fff"/><rect x="1252" y="160" width="1" height="1" fill="#b0b0ff"/><rect x="1255" y="159" width="1" height="1" fill="#fff"/><rect x="1255" y="160" width="1" height="1" fill="#b0b0ff"/><rect x="1263" y="159" width="1" height="1" fill="#fff"/><rect x="1263" y="160" width="1" height="1" fill="#b0b0ff"/><rect x="1267" y="159" width="1" height="1" fill="#fff"/><rect x="1267" y="160" width="1" height="1" fill="#b0b0ff"/><rect x="1275" y="159" width="1" height="1" fill="#fff"/><rect x="1275" y="160" width="1" height="1" fill="#b0b0ff"/><rect x="89.5" y="105.5" width="6" height="6" fill="#0000ff" stroke="#000" stroke-width="1"/><rect x="120.5" y="639.5" width="6" height="6" fill="#fff" stroke="#000" stroke-width="1"/></svg>
<div class="t" style="right:1158px;top:102px;font-size:12px;color:#0000ff;letter-spacing:-0.3px">1,0</div>
<div class="t" style="right:1158px;top:155px;font-size:12px;color:#0000ff;letter-spacing:-0.3px">0,8</div>
<div class="t" style="right:1158px;top:209px;font-size:12px;color:#0000ff;letter-spacing:-0.3px">0,6</div>
<div class="t" style="right:1158px;top:262px;font-size:12px;color:#0000ff;letter-spacing:-0.3px">0,4</div>
<div class="t" style="right:1158px;top:315px;font-size:12px;color:#0000ff;letter-spacing:-0.3px">0,2</div>
<div class="t" style="right:1158px;top:368px;font-size:12px;color:#0000ff;letter-spacing:-0.3px">0,0</div>
<div class="t" style="right:1158px;top:421px;font-size:12px;color:#0000ff;letter-spacing:-0.3px">-0,2</div>
<div class="t" style="right:1158px;top:474px;font-size:12px;color:#0000ff;letter-spacing:-0.3px">-0,4</div>
<div class="t" style="right:1158px;top:527px;font-size:12px;color:#0000ff;letter-spacing:-0.3px">-0,6</div>
<div class="t" style="right:1158px;top:580px;font-size:12px;color:#0000ff;letter-spacing:-0.3px">-0,8</div>
<div class="t" style="right:1158px;top:633px;font-size:12px;color:#0000ff;letter-spacing:-0.3px">-1,0</div>
<div class="t" style="right:1158px;top:117px;font-size:12px;color:#0000ff">В</div>
<div class="t" style="left:93px;width:60px;text-align:center;top:646px;font-size:12px;color:#000;letter-spacing:-0.3px">0,0</div>
<div class="t" style="left:213px;width:60px;text-align:center;top:646px;font-size:12px;color:#000;letter-spacing:-0.3px">1,0</div>
<div class="t" style="left:333px;width:60px;text-align:center;top:646px;font-size:12px;color:#000;letter-spacing:-0.3px">2,0</div>
<div class="t" style="left:453px;width:60px;text-align:center;top:646px;font-size:12px;color:#000;letter-spacing:-0.3px">3,0</div>
<div class="t" style="left:572px;width:60px;text-align:center;top:646px;font-size:12px;color:#000;letter-spacing:-0.3px">4,0</div>
<div class="t" style="left:692px;width:60px;text-align:center;top:646px;font-size:12px;color:#000;letter-spacing:-0.3px">5,0</div>
<div class="t" style="left:812px;width:60px;text-align:center;top:646px;font-size:12px;color:#000;letter-spacing:-0.3px">6,0</div>
<div class="t" style="left:932px;width:60px;text-align:center;top:646px;font-size:12px;color:#000;letter-spacing:-0.3px">7,0</div>
<div class="t" style="left:1052px;width:60px;text-align:center;top:646px;font-size:12px;color:#000;letter-spacing:-0.3px">8,0</div>
<div class="t" style="left:1172px;width:60px;text-align:center;top:646px;font-size:12px;color:#000;letter-spacing:-0.3px">9,0</div>
<div class="ab" style="left:89px;top:659px;width:32px;height:12px;background:#8080ff"></div>
<div class="t" style="left:88px;top:661px;width:33px;text-align:center;font-size:9.5px;color:#fff;letter-spacing:0px">x1,0</div>
<div class="t" style="left:124px;top:660px;font-size:12px;color:#000;letter-spacing:-0.3px">mсек</div>
<div class="ab" style="left:86px;top:677px;width:1194px;height:20px;background:#a0a0a0"></div>
<div class="ab" style="left:86px;top:697px;width:15px;height:44px;background:#a0a0a0"></div>
<div class="ab" style="left:101px;top:697px;width:1179px;height:21px;background:#3597fb"></div>
<div class="ab" style="left:101px;top:718px;width:1179px;height:22px;background:#fff"></div>
<div class="ab" style="left:101px;top:718px;width:1179px;height:1px;background:#c4c4c4"></div>
<div class="ab" style="left:101px;top:740px;width:1179px;height:1px;background:#c0c0c0"></div>
<div class="ab" style="left:166px;top:679px;width:1px;height:17px;background:#e4e4e4"></div>
<div class="ab" style="left:166px;top:697px;width:1px;height:43px;background:#a0a0a0"></div>
<div class="ab" style="left:290px;top:679px;width:1px;height:17px;background:#e4e4e4"></div>
<div class="ab" style="left:290px;top:697px;width:1px;height:43px;background:#a0a0a0"></div>
<div class="ab" style="left:399px;top:679px;width:1px;height:17px;background:#e4e4e4"></div>
<div class="ab" style="left:399px;top:697px;width:1px;height:43px;background:#a0a0a0"></div>
<div class="ab" style="left:499px;top:679px;width:1px;height:17px;background:#e4e4e4"></div>
<div class="ab" style="left:499px;top:697px;width:1px;height:43px;background:#a0a0a0"></div>
<div class="ab" style="left:553px;top:679px;width:1px;height:17px;background:#e4e4e4"></div>
<div class="ab" style="left:553px;top:697px;width:1px;height:43px;background:#a0a0a0"></div>
<div class="ab" style="left:612px;top:679px;width:1px;height:17px;background:#e4e4e4"></div>
<div class="ab" style="left:612px;top:697px;width:1px;height:43px;background:#a0a0a0"></div>
<div class="ab" style="left:692px;top:679px;width:1px;height:17px;background:#e4e4e4"></div>
<div class="ab" style="left:692px;top:697px;width:1px;height:43px;background:#a0a0a0"></div>
<div class="ab" style="left:870px;top:679px;width:1px;height:17px;background:#e4e4e4"></div>
<div class="ab" style="left:870px;top:697px;width:1px;height:43px;background:#a0a0a0"></div>
<div class="t" style="left:106px;top:684px;font-size:11.5px;font-weight:bold;color:#fff;letter-spacing:0.6px">Канал</div>
<div class="t" style="left:172px;top:684px;font-size:11.5px;font-weight:bold;color:#fff;letter-spacing:0px">Имя</div>
<div class="t" style="left:296px;top:684px;font-size:11.5px;font-weight:bold;color:#fff;letter-spacing:0px">Полоса</div>
<div class="t" style="left:405px;top:684px;font-size:11.5px;font-weight:bold;color:#fff;letter-spacing:0.4px">Значение</div>
<div class="t" style="left:506px;top:684px;font-size:11.5px;font-weight:bold;color:#fff;letter-spacing:0px">Мин</div>
<div class="t" style="left:559px;top:684px;font-size:11.5px;font-weight:bold;color:#fff;letter-spacing:0.8px">Макс</div>
<div class="t" style="left:618px;top:684px;font-size:11.5px;font-weight:bold;color:#fff;letter-spacing:0.45px">Среднее</div>
<div class="t" style="left:698px;top:684px;font-size:11.5px;font-weight:bold;color:#fff;letter-spacing:0.27px">Стандартное отклонение</div>
<div class="t" style="left:876px;top:684px;font-size:11.5px;font-weight:bold;color:#fff;letter-spacing:0px">Число захватов</div>
<div class="t" style="left:103px;top:704px;font-size:10px;color:#fff;transform:scaleX(0.91);transform-origin:0 0">A</div>
<div class="t" style="left:169px;top:704px;font-size:10px;color:#fff;transform:scaleX(0.91);transform-origin:0 0">Постоянная составляющая</div>
<div class="t" style="left:293px;top:704px;font-size:10px;color:#fff;transform:scaleX(0.91);transform-origin:0 0">По всей осциллограмме</div>
<div class="t" style="left:402px;top:704px;font-size:10px;color:#fff;transform:scaleX(0.91);transform-origin:0 0">802,4 mВ</div>
<div class="t" style="left:502px;top:704px;font-size:10px;color:#fff;transform:scaleX(0.91);transform-origin:0 0">801,9 mВ</div>
<div class="t" style="left:556px;top:704px;font-size:10px;color:#fff;transform:scaleX(0.91);transform-origin:0 0">802,6 mВ</div>
<div class="t" style="left:615px;top:704px;font-size:10px;color:#fff;transform:scaleX(0.91);transform-origin:0 0">802,3 mВ</div>
<div class="t" style="left:695px;top:704px;font-size:10px;color:#fff;transform:scaleX(0.91);transform-origin:0 0">418 µВ</div>
<div class="t" style="left:873px;top:704px;font-size:10px;color:#fff;transform:scaleX(0.91);transform-origin:0 0">20</div>
<div class="t" style="left:103px;top:726px;font-size:10px;color:#000;transform:scaleX(0.91);transform-origin:0 0">A</div>
<div class="t" style="left:169px;top:726px;font-size:10px;color:#000;transform:scaleX(0.91);transform-origin:0 0">Пик- Пик</div>
<div class="t" style="left:293px;top:726px;font-size:10px;color:#000;transform:scaleX(0.91);transform-origin:0 0">По всей осциллограмме</div>
<div class="t" style="left:402px;top:726px;font-size:10px;color:#000;transform:scaleX(0.91);transform-origin:0 0">17,58 mВ</div>
<div class="t" style="left:502px;top:726px;font-size:10px;color:#000;transform:scaleX(0.91);transform-origin:0 0">8,789 mВ</div>
<div class="t" style="left:556px;top:726px;font-size:10px;color:#000;transform:scaleX(0.91);transform-origin:0 0">17,58 mВ</div>
<div class="t" style="left:615px;top:726px;font-size:10px;color:#000;transform:scaleX(0.91);transform-origin:0 0">16,7 mВ</div>
<div class="t" style="left:695px;top:726px;font-size:10px;color:#000;transform:scaleX(0.91);transform-origin:0 0">2,705 mВ</div>
<div class="t" style="left:873px;top:726px;font-size:10px;color:#000;transform:scaleX(0.91);transform-origin:0 0">20</div>
<div class="ab" style="left:90px;top:705px;width:6px;height:6px;background:#0000ff;border:1px solid #000"></div>
<div class="ab" style="left:90px;top:727px;width:6px;height:6px;background:#0000ff;border:1px solid #000"></div>
<div class="ab" style="left:83px;top:743px;width:1197px;height:1px;background:#6a5a4a"></div>
<div class="ab" style="left:83px;top:744px;width:1197px;height:1px;background:#8b7565"></div>
<div class="ab" style="left:83px;top:745px;width:1197px;height:1px;background:#fdfcf9"></div>
<div class="ab" style="left:83px;top:746px;width:1197px;height:22px;background:linear-gradient(#f4f2ec,#e7dfcd)"></div>
<div class="ab" style="left:83px;top:768px;width:1197px;height:1px;background:#f3efe6"></div>
<div class="ab" style="left:83px;top:769px;width:1197px;height:1px;background:#8b7565"></div>
<div class="ab" style="left:83px;top:744px;width:1px;height:26px;background:#8b7565"></div>
<div class="sel" style="left:85px;top:746px;width:23px;height:22px"></div>
<svg class="ab" style="left:88px;top:748px" width="18" height="18" viewBox="0 0 18 18">
<defs><radialGradient id="gg" cx=".3" cy=".25" r=".85"><stop offset="0" stop-color="#c0f0a0"/><stop offset=".5" stop-color="#40a830"/><stop offset="1" stop-color="#087008"/></radialGradient></defs>
<circle cx="9" cy="8.8" r="7.5" fill="url(#gg)" stroke="#4a5040" stroke-width="1.1" stroke-dasharray="1.2 0.6"/>
<path d="M5.4 6.5 H8.5 V4.4 L12.8 8.9 L8.5 13.4 V11 H5.4 Z" fill="#f4f4fa" stroke="#303860" stroke-width="1" stroke-linejoin="miter"/>
</svg>
<svg class="ab" style="left:112px;top:748px" width="18" height="18" viewBox="0 0 18 18">
<defs><radialGradient id="rg" cx=".4" cy=".3" r=".8"><stop offset="0" stop-color="#ff9080"/><stop offset="1" stop-color="#d00000"/></radialGradient></defs>
<circle cx="9" cy="9" r="7.8" fill="url(#rg)"/>
<rect x="3.4" y="7.6" width="11.2" height="3" fill="#fff"/>
</svg>
<div class="sep" style="left:137px;top:748px;height:18px"></div>
<div class="cb" style="left:144px;top:747px;width:60px;height:20px;background:#fff;border-color:#c9bdab"></div>
<div class="dd" style="left:187px;top:749px;width:15px;height:16px;border-color:#8b7868"></div>
<svg class="ab" style="left:187px;top:749px" width="15" height="16"><path d="M3.9 6.1 L7.5 9.7 L11.1 6.1" fill="none" stroke="#8b7868" stroke-width="1.25"/></svg>
<div class="t" style="left:148px;top:752px;font-size:12px;color:#000;letter-spacing:-0.1px">Ник...</div>
<svg class="ab" style="left:210px;top:748px" width="20" height="20" viewBox="0 0 20 20">
<rect x="7" y="3" width="6.8" height="14" fill="#e2e2e0"/>
<path d="M1 13.5 H4.5 V6.3 H10.5 V13.5 H17" fill="none" stroke="#b8b0a4" stroke-width="1.1"/>
<rect x="9" y="9" width="3.2" height="3.2" rx="1" fill="#b4eaa8"/>
<path d="M12 1.3 L17.8 1.3 L17.8 7.3 Z" fill="#c2bcb2"/><path d="M12 7.6 L15.6 4" stroke="#c2bcb2" stroke-width="2.6"/>
</svg>
<div class="sep" style="left:235px;top:748px;height:18px"></div>
<div class="cb" style="left:242px;top:747px;width:60px;height:20px;background:#f5f3ee;border-color:#c9bdab"></div>
<div class="dd" style="left:285px;top:749px;width:15px;height:16px;border-color:#c7bcae"></div>
<svg class="ab" style="left:285px;top:749px" width="15" height="16"><path d="M3.9 6.1 L7.5 9.7 L11.1 6.1" fill="none" stroke="#c0b4a4" stroke-width="1.25"/></svg>
<div class="t" style="left:246px;top:751px;font-size:12px;color:#c4bcb2">A</div>
<div class="sep" style="left:309px;top:748px;height:18px"></div>
<div class="sel" style="left:313px;top:746px;width:23px;height:22px"></div>
<svg class="ab" style="left:316px;top:750px" width="18" height="15" viewBox="0 0 18 15">
<path d="M1.5 13.5 L13 2 L16.5 2" fill="none" stroke="#505870" stroke-width="1"/>
<path d="M8.4 2.5 V6 M6.9 4.2 H9.9 M8.4 9 V12.5 M6.9 10.7 H9.9" stroke="#9090f8" stroke-width="1.3"/>
</svg>
<svg class="ab" style="left:340px;top:750px" width="18" height="15" viewBox="0 0 18 15">
<path d="M1.5 2 L5 2 L16.5 13.5" fill="none" stroke="#a8a8a8" stroke-width="1"/>
<path d="M9.9 2.5 V6 M8.4 4.2 H11.4 M9.9 9 V12.5 M8.4 10.7 H11.4" stroke="#b4b4f4" stroke-width="1.3"/>
</svg>
<div class="sep" style="left:365px;top:748px;height:18px"></div>
<div class="cb" style="left:372px;top:747px;width:70px;height:20px;background:#f5f3ee;border-color:#c9bdab"></div>
<div class="dd" style="left:425px;top:749px;width:15px;height:16px;border-color:#c7bcae"></div>
<div class="ab" style="left:426px;top:757px;width:13px;height:1px;background:#c7bcae"></div>
<svg class="ab" style="left:425px;top:749px" width="15" height="16"><path d="M5.0 5.2 L7.5 2.9 L10.0 5.2 M5.0 10.6 L7.5 12.9 L10.0 10.6" fill="none" stroke="#c0b4a4" stroke-width="1.2"/></svg>
<div class="t" style="left:376px;top:751px;font-size:12px;color:#c4bcb2;letter-spacing:-0.2px">-756,5...</div>
<div class="sep" style="left:449px;top:748px;height:18px"></div>
<div class="cb" style="left:456px;top:747px;width:70px;height:20px;background:#f5f3ee;border-color:#c9bdab"></div>
<div class="dd" style="left:509px;top:749px;width:15px;height:16px;border-color:#c7bcae"></div>
<div class="ab" style="left:510px;top:757px;width:13px;height:1px;background:#c7bcae"></div>
<svg class="ab" style="left:509px;top:749px" width="15" height="16"><path d="M5.0 5.2 L7.5 2.9 L10.0 5.2 M5.0 10.6 L7.5 12.9 L10.0 10.6" fill="none" stroke="#c0b4a4" stroke-width="1.2"/></svg>
<div class="t" style="left:460px;top:751px;font-size:12px;color:#c4bcb2;letter-spacing:-0.2px">50%</div>
<svg class="ab" style="left:532px;top:749px" width="20" height="18" viewBox="0 0 20 18">
<path d="M3.4 2 V5.6 M3.4 3.4 H13" fill="none" stroke="#b4b4f0" stroke-width="1.3"/>
<path d="M12.4 1.2 L14.9 3.4 L12.4 5.6 Z" fill="#b4b4f0"/>
<path d="M1.3 10.5 C3 7.5,4.5 5.3,6 5.3 C7.5 5.3,9 9,10.5 10.8 C12 12.6,13 14.5,13.8 14.5 C14.8 14.5,16 13.5,16.8 12.5" fill="none" stroke="#9a9a9a" stroke-width="0.9"/>
<path d="M14.5 5.2 L16.8 7.5 L14.5 9.8 L12.2 7.5 Z" fill="#f2f2b0" stroke="#b8b898" stroke-width="0.6"/>
</svg>
<div class="cb" style="left:556px;top:747px;width:70px;height:20px;background:#f5f3ee;border-color:#c9bdab"></div>
<div class="dd" style="left:609px;top:749px;width:15px;height:16px;border-color:#c7bcae"></div>
<div class="ab" style="left:610px;top:757px;width:13px;height:1px;background:#c7bcae"></div>
<svg class="ab" style="left:609px;top:749px" width="15" height="16"><path d="M5.0 5.2 L7.5 2.9 L10.0 5.2 M5.0 10.6 L7.5 12.9 L10.0 10.6" fill="none" stroke="#c0b4a4" stroke-width="1.2"/></svg>
<div class="t" style="left:560px;top:751px;font-size:12px;color:#c4bcb2;letter-spacing:-0.2px">0 сек</div>
<div class="sep" style="left:629px;top:748px;height:18px"></div>
<svg class="ab" style="left:638px;top:749px" width="15" height="15" viewBox="0 0 15 15">
<defs><linearGradient id="gb638" x1="0" y1="0" x2="1" y2="1"><stop offset="0" stop-color="#a0e880"/><stop offset=".5" stop-color="#30b020"/><stop offset="1" stop-color="#007000"/></linearGradient></defs>
<rect x="0.5" y="0.5" width="14" height="14" fill="url(#gb638)" stroke="#108010"/>
<path d="M14.5 1 V14.5 H1" fill="none" stroke="#203870" stroke-width="1"/>
<path d="M7.5 3 V12 M3 7.5 H12" stroke="#fff" stroke-width="2.4"/></svg>
<svg class="ab" style="left:662px;top:749px" width="15" height="15" viewBox="0 0 15 15">
<defs><linearGradient id="gb662" x1="0" y1="0" x2="1" y2="1"><stop offset="0" stop-color="#a0e880"/><stop offset=".5" stop-color="#30b020"/><stop offset="1" stop-color="#007000"/></linearGradient></defs>
<rect x="0.5" y="0.5" width="14" height="14" fill="url(#gb662)" stroke="#108010"/>
<path d="M14.5 1 V14.5 H1" fill="none" stroke="#203870" stroke-width="1"/>
<path d="M3 7.5 H12" stroke="#fff" stroke-width="2.4"/></svg>
<svg class="ab" style="left:686px;top:749px" width="15" height="15" viewBox="0 0 15 15">
<defs><linearGradient id="gb686" x1="0" y1="0" x2="1" y2="1"><stop offset="0" stop-color="#a0e880"/><stop offset=".5" stop-color="#30b020"/><stop offset="1" stop-color="#007000"/></linearGradient></defs>
<rect x="0.5" y="0.5" width="14" height="14" fill="url(#gb686)" stroke="#108010"/>
<path d="M14.5 1 V14.5 H1" fill="none" stroke="#203870" stroke-width="1"/>
<path d="M2.5 10.5 L7.5 4 L12.5 10.5 Z" fill="#fff"/></svg>
<div class="ab" style="left:99px;top:766px;width:28px;height:12px;border-radius:50%;background:linear-gradient(#e4eaf0,#c0ccd6);border:1px solid #7f98b0"></div>
</body></html>
